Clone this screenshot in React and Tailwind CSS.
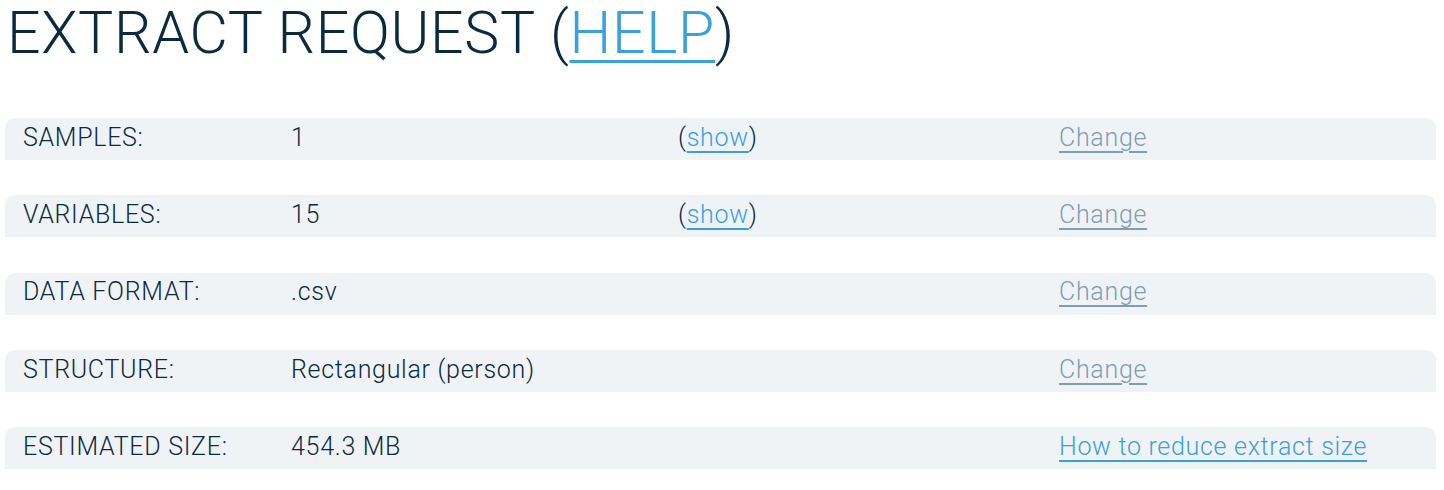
import React from 'react';

const ROWS = [
  { label: 'SAMPLES:', value: '1', show: true, action: 'Change' },
  { label: 'VARIABLES:', value: '15', show: true, action: 'Change' },
  { label: 'DATA FORMAT:', value: '.csv', action: 'Change' },
  { label: 'STRUCTURE:', value: 'Rectangular (person)', action: 'Change' },
  { label: 'ESTIMATED SIZE:', value: '454.3 MB', action: 'How to reduce extract size', primary: true },
];

export default function App() {
  return (
    <div className="min-h-[490px] bg-white text-[#0c2a3f]" style={{ fontFamily: 'Roboto, "Noto Sans", sans-serif' }}>
      <h1 className="pl-[7px] text-[59px] font-light leading-[66px] tracking-[0.7px]">
        EXTRACT REQUEST (<a href="#" className="text-[#3aa0e0] underline decoration-[3px] underline-offset-[7px]">HELP</a>)
      </h1>

      <div className="mt-[52px] flex flex-col gap-[35.25px] pl-[5px] pr-[8px]">
        {ROWS.map(row => (
          <div key={row.label} className="flex h-[42px] items-center rounded-t-[10px] bg-[#f0f3f6] pb-[3px] text-[25px] font-light tracking-[0.7px]">
            <div className="w-[286px] pl-[18px]">{row.label}</div>
            <div className="w-[387px]">{row.value}</div>
            <div className="w-[381px]">
              {row.show && (
                <span>(<a href="#" className="text-[#3aa0e0] underline decoration-2 underline-offset-[5px]">show</a>)</span>
              )}
            </div>
            <a href="#" className={`underline decoration-2 underline-offset-[5px] ${row.primary ? 'text-[#3aa0e0]' : 'text-[#7f9db4]'}`}>
              {row.action}
            </a>
          </div>
        ))}
      </div>
    </div>
  );
}
